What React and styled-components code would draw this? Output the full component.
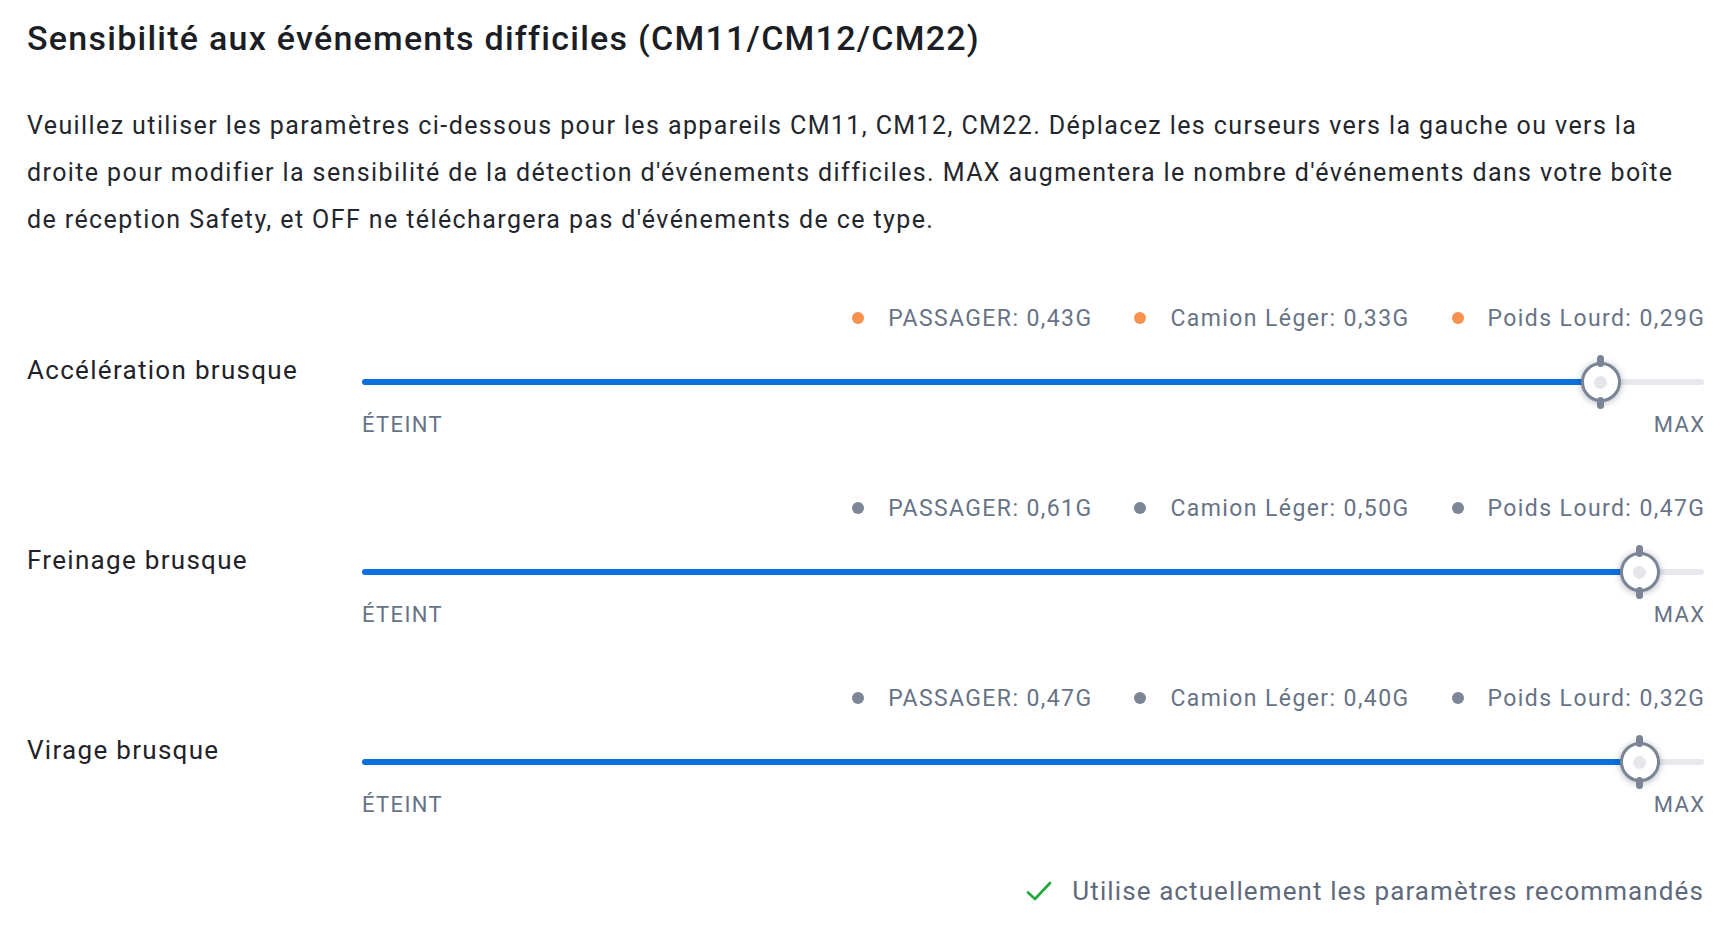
import React from 'react';
import styled, { createGlobalStyle } from 'styled-components';

const GlobalStyle = createGlobalStyle`
    html, body {
        margin: 0;
        padding: 0;
        background: #ffffff;
    }
    body {
        font-family: Roboto, "Liberation Sans", sans-serif;
        color: #1f2229;
    }
`;

const rows = [
    {
        label: 'Accélération brusque',
        value: 92.3,
        dot: '#f7924f',
        legend: ['PASSAGER: 0,43G', 'Camion Léger: 0,33G', 'Poids Lourd: 0,29G'],
    },
    {
        label: 'Freinage brusque',
        value: 95.2,
        dot: '#7c8696',
        legend: ['PASSAGER: 0,61G', 'Camion Léger: 0,50G', 'Poids Lourd: 0,47G'],
    },
    {
        label: 'Virage brusque',
        value: 95.2,
        dot: '#7c8696',
        legend: ['PASSAGER: 0,47G', 'Camion Léger: 0,40G', 'Poids Lourd: 0,32G'],
    },
];

const App = () => {
    return (
        <>
            <GlobalStyle />
            <Page>
                <Title>Sensibilité aux événements difficiles (CM11/CM12/CM22)</Title>
                <Intro>
                    Veuillez utiliser les paramètres ci-dessous pour les appareils CM11, CM12, CM22. Déplacez les curseurs vers la gauche ou vers la droite pour modifier la sensibilité de la détection d'événements difficiles. MAX augmentera le nombre d'événements dans votre boîte de réception Safety, et OFF ne téléchargera pas d'événements de ce type.
                </Intro>
                <Rows>
                    {rows.map((row) => (
                        <SettingRow key={row.label}>
                            <RowLabel>{row.label}</RowLabel>
                            <SliderBlock>
                                <Legend>
                                    {row.legend.map((item) => (
                                        <LegendItem key={item}>
                                            <Dot color={row.dot} />
                                            {item}
                                        </LegendItem>
                                    ))}
                                </Legend>
                                <TrackArea>
                                    <Track>
                                        <Fill style={{ width: `${row.value}%` }} />
                                        <Thumb style={{ left: `${row.value}%` }}>
                                            <ThumbCore />
                                        </Thumb>
                                    </Track>
                                </TrackArea>
                                <EndLabels>
                                    <span>ÉTEINT</span>
                                    <span>MAX</span>
                                </EndLabels>
                            </SliderBlock>
                        </SettingRow>
                    ))}
                </Rows>
                <Status>
                    <svg width="26" height="22" viewBox="0 0 26 22" fill="none">
                        <path d="M2 12.5L9 19L24 3" stroke="#1fa83b" strokeWidth="2.6" strokeLinecap="round" strokeLinejoin="round" />
                    </svg>
                    Utilise actuellement les paramètres recommandés
                </Status>
            </Page>
        </>
    );
};

const Page = styled.div`
    padding: 18px 20px 30px 27px;
    width: 1677px;
`;

const Title = styled.h1`
    margin: 0;
    font-size: 34px;
    line-height: 40px;
    font-weight: 500;
    letter-spacing: 1.25px;
    color: #1b1e25;
`;

const Intro = styled.p`
    margin: 44px 0 0;
    width: 1670px;
    font-size: 25px;
    line-height: 47px;
    letter-spacing: 1.4px;
    color: #23262d;
`;

const Rows = styled.div`
    display: flex;
    flex-direction: column;
    gap: 55px;
    margin-top: 60px;
`;

const SettingRow = styled.div`
    display: grid;
    grid-template-columns: 335px 1fr;
`;

const RowLabel = styled.div`
    margin-top: 52px;
    font-size: 26px;
    line-height: 30px;
    letter-spacing: 1.3px;
    color: #1f2229;
`;

const SliderBlock = styled.div`
    display: flex;
    flex-direction: column;
`;

const Legend = styled.div`
    display: flex;
    justify-content: flex-end;
    align-items: center;
    gap: 42px;
    height: 30px;
    margin-bottom: 29px;
`;

const LegendItem = styled.div`
    display: flex;
    align-items: center;
    font-size: 23px;
    letter-spacing: 1.4px;
    color: #677386;

    &:last-child {
        margin-right: -1.4px;
    }
`;

const Dot = styled.span`
    width: 12px;
    height: 12px;
    border-radius: 50%;
    background: ${(p) => p.color};
    margin-right: 24px;
`;

const TrackArea = styled.div`
    height: 40px;
    display: flex;
    align-items: center;
`;

const Track = styled.div`
    position: relative;
    width: 100%;
    height: 6px;
    border-radius: 3px;
    background: #e7e9ed;
`;

const Fill = styled.div`
    height: 100%;
    border-radius: 3px;
    background: #0b6fdf;
`;

const Thumb = styled.div`
    position: absolute;
    top: 50%;
    width: 40px;
    height: 40px;
    margin: -20px 0 0 -20px;
    box-sizing: border-box;
    border-radius: 50%;
    border: 3px solid #7a8494;
    background: #ffffff;
    box-shadow: 0 1px 7px rgba(30, 40, 60, 0.35);
    display: flex;
    align-items: center;
    justify-content: center;

    &::before, &::after {
        content: '';
        position: absolute;
        left: 50%;
        width: 7px;
        height: 12px;
        margin-left: -3.5px;
        border-radius: 3.5px;
        background: #7a8494;
    }
    &::before {
        top: -10px;
    }
    &::after {
        bottom: -10px;
    }
`;

const ThumbCore = styled.span`
    width: 13px;
    height: 13px;
    border-radius: 50%;
    background: #e4e6ea;
`;

const EndLabels = styled.div`
    display: flex;
    justify-content: space-between;
    margin-top: 10px;
    font-size: 22px;
    line-height: 26px;
    letter-spacing: 1.35px;
    color: #677386;

    span:last-child {
        margin-right: -1.35px;
    }
`;

const Status = styled.div`
    display: flex;
    justify-content: flex-end;
    align-items: center;
    gap: 20px;
    margin-top: 58px;
    font-size: 26px;
    line-height: 30px;
    letter-spacing: 1.1px;
    color: #5e6a7c;
`;

export default App;
